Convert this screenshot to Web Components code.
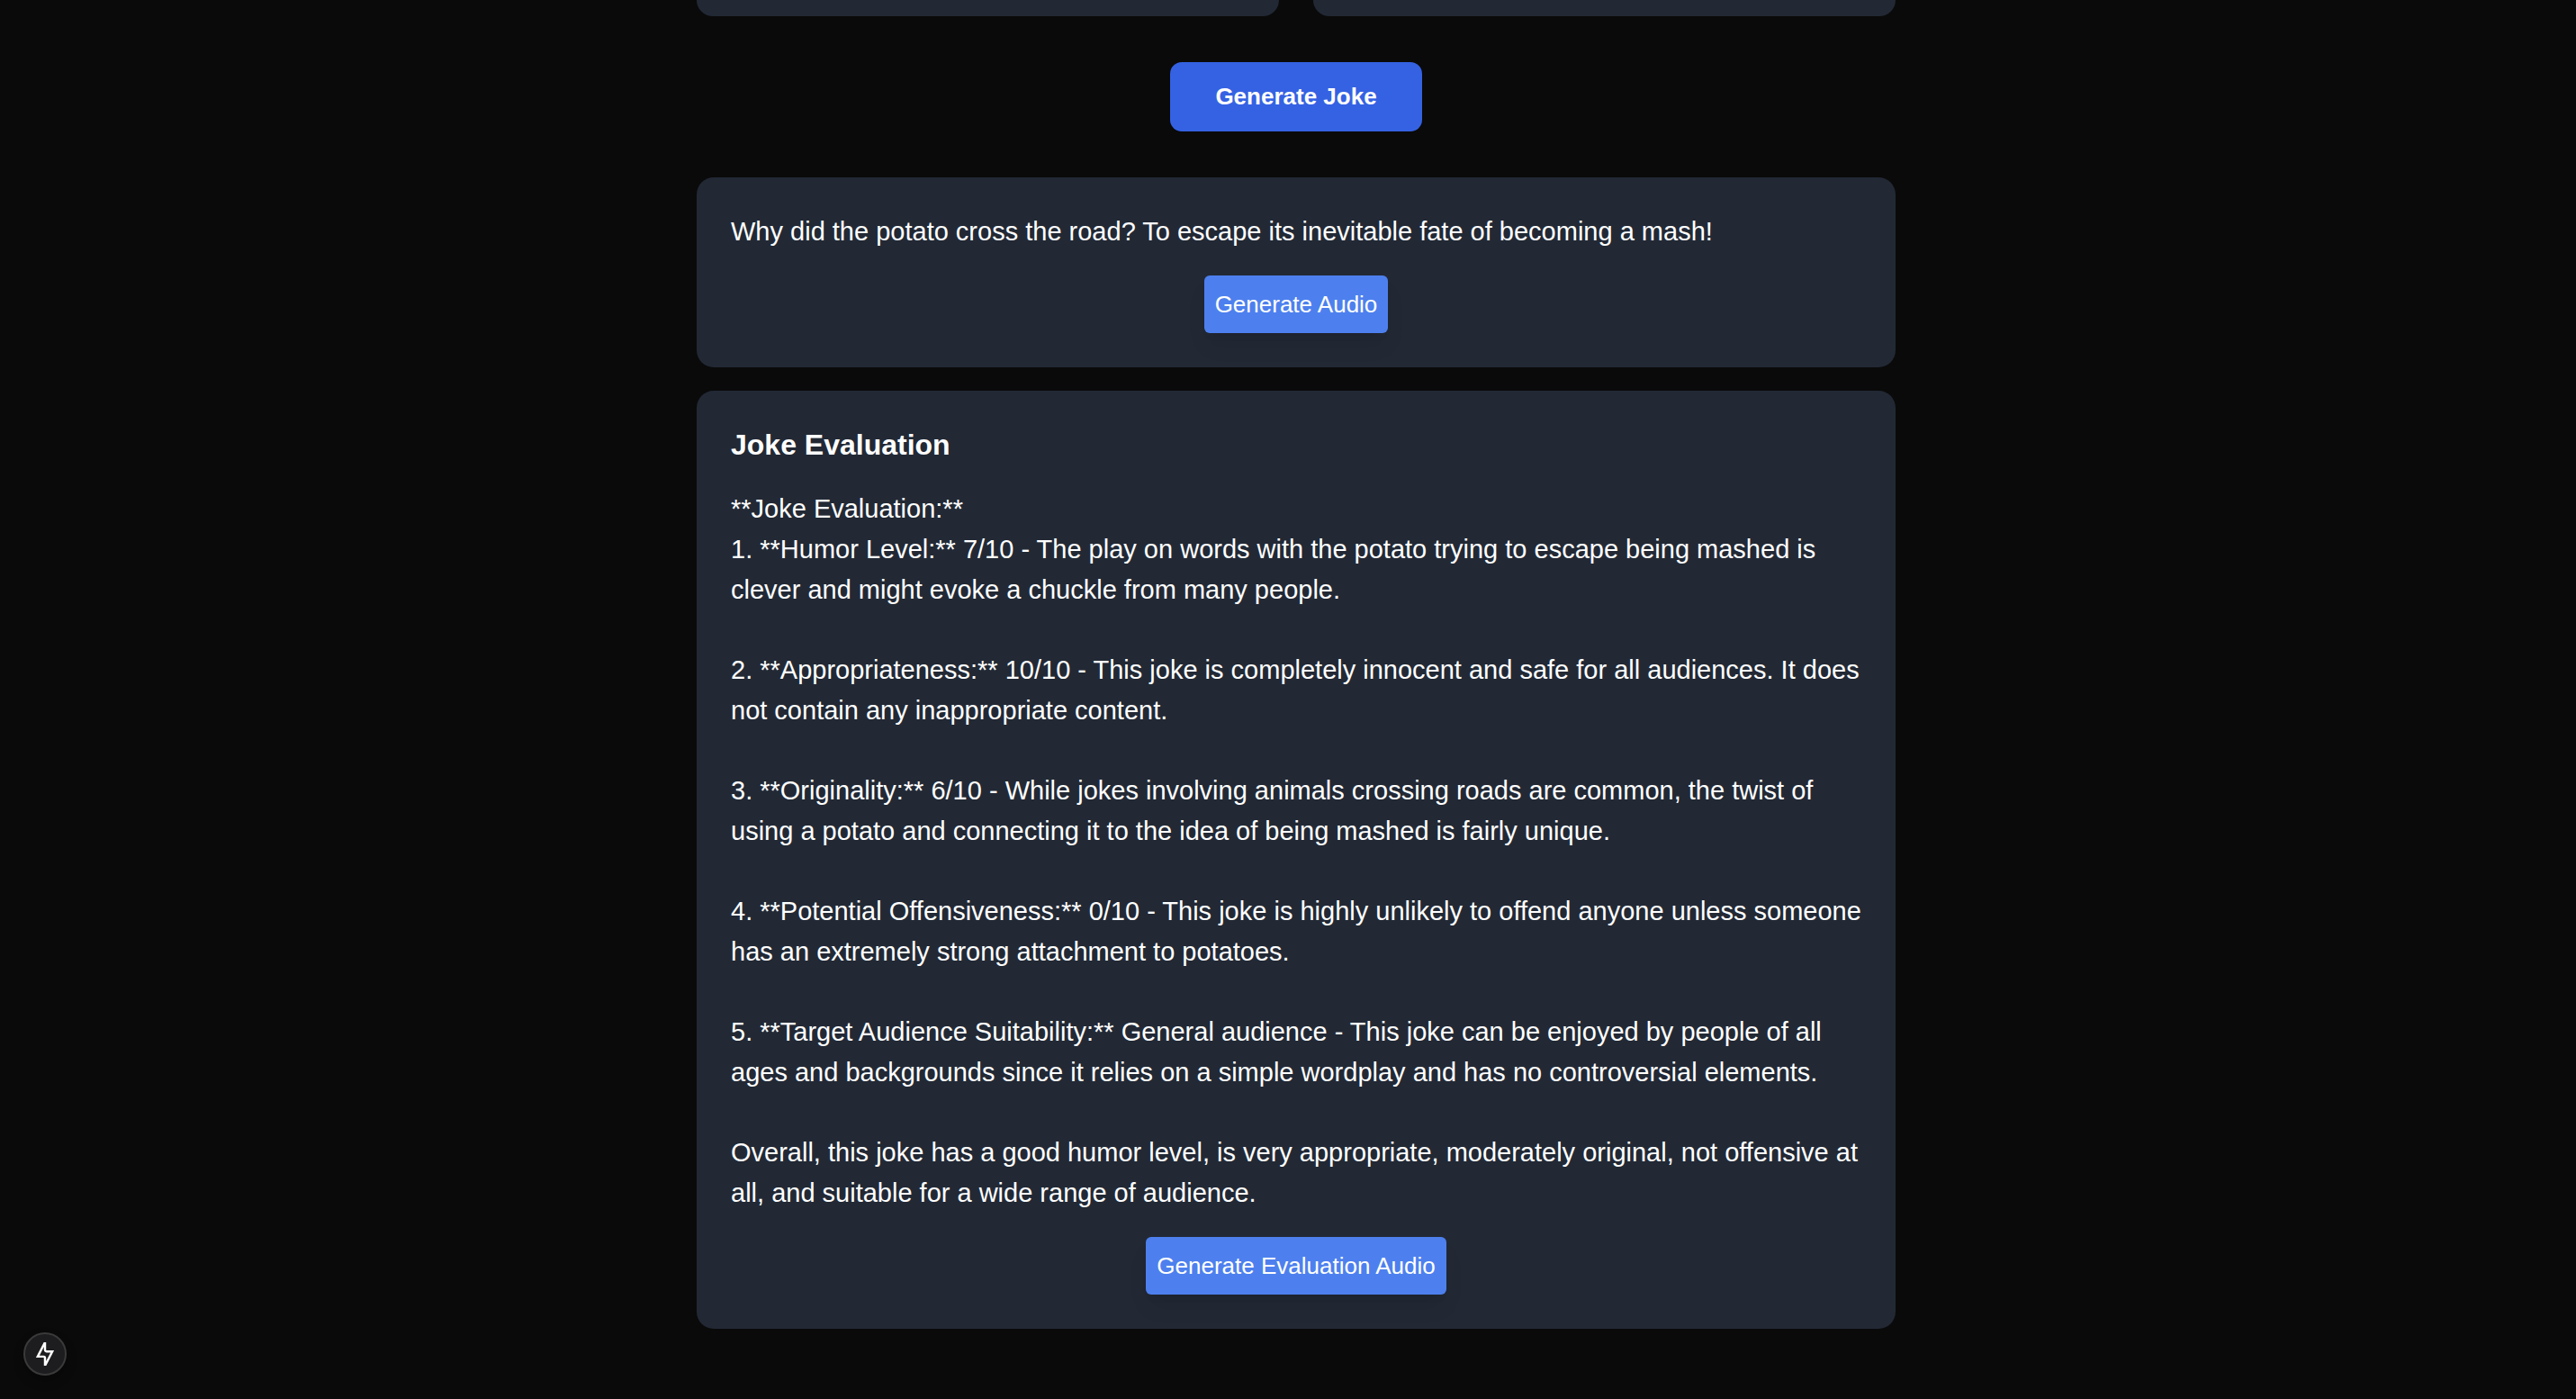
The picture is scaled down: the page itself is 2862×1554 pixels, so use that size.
<!DOCTYPE html>
<html lang="en">
<head>
<meta charset="utf-8">
<meta name="viewport" content="width=device-width, initial-scale=1">
<title>Joke Generator</title>
<style>
  body {
    margin: 0;
    min-height: 100vh;
    background: #0a0a0a;
    color: #fff;
    font-family: Arial, "Liberation Sans", sans-serif;
    overflow: hidden;
  }
</style>
</head>
<body>
<joke-page>
  <option-row>
    <option-panel></option-panel>
    <option-panel></option-panel>
  </option-row>
  <primary-button>Generate Joke</primary-button>
  <result-list>
    <result-card>
      <p>Why did the potato cross the road? To escape its inevitable fate of becoming a mash!</p>
      <audio-button slot="action">Generate Audio</audio-button>
    </result-card>
    <result-card heading="Joke Evaluation">
      <p>**Joke Evaluation:**<br>1. **Humor Level:** 7/10 - The play on words with the potato trying to escape being mashed is clever and might evoke a chuckle from many people.</p>
      <p>2. **Appropriateness:** 10/10 - This joke is completely innocent and safe for all audiences. It does not contain any inappropriate content.</p>
      <p>3. **Originality:** 6/10 - While jokes involving animals crossing roads are common, the twist of using a potato and connecting it to the idea of being mashed is fairly unique.</p>
      <p>4. **Potential Offensiveness:** 0/10 - This joke is highly unlikely to offend anyone unless someone has an extremely strong attachment to potatoes.</p>
      <p>5. **Target Audience Suitability:** General audience - This joke can be enjoyed by people of all ages and backgrounds since it relies on a simple wordplay and has no controversial elements.</p>
      <p>Overall, this joke has a good humor level, is very appropriate, moderately original, not offensive at all, and suitable for a wide range of audience.</p>
      <audio-button slot="action">Generate Evaluation Audio</audio-button>
    </result-card>
  </result-list>
</joke-page>
<route-indicator></route-indicator>

<script>
  const define = (name, html, setup) => {
    const template = document.createElement('template');
    template.innerHTML = html;
    customElements.define(name, class extends HTMLElement {
      constructor() {
        super();
        this.attachShadow({ mode: 'open' }).append(template.content.cloneNode(true));
      }
      connectedCallback() {
        if (setup) setup(this, this.shadowRoot);
      }
    });
  };

  define('joke-page', `
    <style>
      :host { display: block; padding-left: 18px; }
      main {
        display: flex; flex-direction: column; align-items: center; gap: 51px;
        max-width: 1332px; margin: 0 auto;
      }
    </style>
    <main><slot></slot></main>`);

  define('option-row', `
    <style>
      :host { display: grid; grid-template-columns: 1fr 1fr; gap: 38px; align-self: stretch; }
    </style>
    <slot></slot>`);

  define('option-panel', `
    <style>
      :host { display: block; padding-top: 18px; background: #222935; border-radius: 0 0 19px 19px; }
    </style>
    <slot></slot>`);

  define('primary-button', `
    <style>
      :host { display: block; }
      button {
        display: block; margin: 0; border: 0; padding: 19px 50px; border-radius: 13px;
        background: #3562e3; color: #fff; font: bold 26px/39px Arial, "Liberation Sans", sans-serif;
        cursor: pointer;
      }
    </style>
    <button type="button"><slot></slot></button>`);

  define('audio-button', `
    <style>
      :host { display: block; }
      button {
        display: block; margin: 0; border: 0; padding: 13px 12px; border-radius: 6px;
        background: #4d80ee; color: #fff; font: 26px/38px Arial, "Liberation Sans", sans-serif;
        box-shadow: 0 16px 24px -5px rgb(0 0 0 / 0.1), 0 6px 10px -6px rgb(0 0 0 / 0.1);
        cursor: pointer;
      }
    </style>
    <button type="button"><slot></slot></button>`);

  define('result-list', `
    <style>
      :host { display: flex; flex-direction: column; gap: 26px; align-self: stretch; }
    </style>
    <slot></slot>`);

  define('result-card', `
    <style>
      :host {
        display: flex; flex-direction: column; gap: 26px; padding: 38px;
        background: #222935; border-radius: 19px;
      }
      h2 { margin: 0; font-size: 32px; line-height: 45px; }
      .text { display: flex; flex-direction: column; gap: 44px; font-size: 29px; line-height: 45px; }
      ::slotted(p) { margin: 0; }
      .action { display: flex; justify-content: center; }
    </style>
    <h2></h2>
    <div class="text"><slot></slot></div>
    <div class="action"><slot name="action"></slot></div>`,
    (host, root) => {
      const title = root.querySelector('h2');
      if (!title) return;
      if (host.hasAttribute('heading')) title.textContent = host.getAttribute('heading');
      else title.remove();
    });

  define('route-indicator', `
    <style>
      :host { position: fixed; left: 26px; bottom: 26px; }
      button {
        display: flex; align-items: center; justify-content: center; box-sizing: border-box;
        width: 48px; height: 48px; margin: 0; padding: 0; border-radius: 50%;
        border: 2px solid #3a3a3b; background: #1d1d1f; color: #fff;
        box-shadow: 0 6px 12px rgb(0 0 0 / 0.25); cursor: pointer;
      }
      svg { display: block; width: 26px; height: 26px; }
    </style>
    <button type="button" aria-label="Static route">
      <svg viewBox="0 0 16 16" fill="currentColor" aria-hidden="true">
        <path fill-rule="evenodd" d="M7.157 0 2.333 9.408l-.56 1.092H7a.25.25 0 0 1 .25.25V16h1.593l4.824-9.408.56-1.092H9a.25.25 0 0 1-.25-.25V0H7.157ZM7 9H4.227L7.25 3.106V5.25C7.25 6.216 8.034 7 9 7h2.773L8.75 12.894V10.75A1.75 1.75 0 0 0 7 9Z"/>
      </svg>
    </button>`);
</script>
</body>
</html>
